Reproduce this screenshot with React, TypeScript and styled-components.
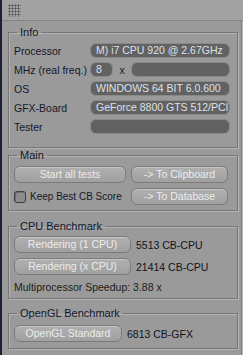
import { Fragment } from "react";
import styled, { createGlobalStyle } from "styled-components";

const GlobalStyle = createGlobalStyle`
  html, body {
    margin: 0;
    padding: 0;
    background: #9a9a9a;
  }
  body {
    font-family: "Liberation Sans", Arial, sans-serif;
  }
`;

const Window = styled.div`
  width: 241px;
  height: 355px;
  border-left: 2px solid #1c2131;
  background: #9a9a9a;
  display: flex;
  flex-direction: column;
  overflow: hidden;
`;

const TopBar = styled.div`
  height: 20px;
  flex: none;
  background: #a2a2a2;
  border-bottom: 1px solid #858585;
  display: flex;
  align-items: center;
  padding-left: 6px;
`;

const Grip = styled.div`
  width: 13px;
  height: 13px;
  background-image: radial-gradient(#4a4a4a 0.9px, transparent 1.1px);
  background-size: 3px 3px;
`;

const Body = styled.div`
  flex: 1;
  display: flex;
`;

const Panel = styled.div`
  width: 230px;
  padding: 5px 3px 0 6px;
  border-right: 1px solid #7d7d7d;
  box-shadow: 1px 0 0 #b9b9b9;
  display: flex;
  flex-direction: column;
`;

const Group = styled.fieldset<{ $pad: string; $gap?: number }>`
  margin: 0 0 ${({ $gap }) => $gap ?? 0}px 0;
  padding: ${({ $pad }) => $pad};
  border: 1px solid #767676;
  box-shadow: inset 1px 1px 0 #b4b4b4, 1px 1px 0 #b4b4b4;
  min-width: 0;
`;

const Legend = styled.legend`
  margin-left: 3px;
  padding: 0 3px;
  font-size: 11px;
  line-height: 13px;
  color: #15172e;
`;

const InfoGrid = styled.div`
  display: grid;
  grid-template-columns: 76px 1fr;
  row-gap: 4px;
  align-items: center;
`;

const Label = styled.div`
  font-size: 10.5px;
  color: #16182a;
  white-space: nowrap;
`;

const Field = styled.div<{ $w?: number }>`
  height: 15px;
  box-sizing: border-box;
  ${({ $w }) => ($w ? `width: ${$w}px; flex: none;` : "flex: 1;")}
  background: #626262;
  border: 1px solid #8a8a8a;
  border-radius: 6px;
  padding: 0 5px;
  color: #dde1ec;
  font-size: 10.5px;
  line-height: 13px;
  white-space: nowrap;
  overflow: hidden;
`;

const FreqRow = styled.div`
  display: flex;
  align-items: center;
`;

const Times = styled.span`
  width: 18px;
  text-align: center;
  font-size: 10.5px;
  color: #16182a;
`;

const ButtonGrid = styled.div<{ $cols: string }>`
  display: grid;
  grid-template-columns: ${({ $cols }) => $cols};
  column-gap: 5px;
  row-gap: 5px;
  align-items: center;
`;

const Button = styled.div`
  height: 17px;
  box-sizing: border-box;
  border: 1px solid #7b7b7b;
  border-radius: 6px;
  background: linear-gradient(#b0b0b0, #a0a0a0);
  box-shadow: inset 0 1px 0 #c6c6c6;
  color: #ececec;
  font-size: 10.5px;
  line-height: 15px;
  text-align: center;
  white-space: nowrap;
`;

const CheckRow = styled.div`
  display: flex;
  align-items: center;
  gap: 4px;
`;

const CheckBox = styled.div`
  width: 12px;
  height: 12px;
  box-sizing: border-box;
  border: 1px solid #3c3c3c;
  border-radius: 3px;
  background: #8c8c8c;
  box-shadow: inset 1px 1px 0 #6f6f6f;
`;

const CheckLabel = styled.span`
  font-size: 10px;
  color: #16182a;
  white-space: nowrap;
`;

const Score = styled.div`
  font-size: 10.5px;
  color: #111322;
  white-space: nowrap;
`;

const Speedup = styled.div`
  margin-top: 6px;
  font-size: 10.5px;
  line-height: 12px;
  color: #1c1d18;
`;

const infoRows = [
  { label: "OS", value: "WINDOWS 64 BIT 6.0.600" },
  { label: "GFX-Board", value: "GeForce 8800 GTS 512/PCI" },
  { label: "Tester", value: "" },
];

export default function App() {
  return (
    <>
      <GlobalStyle />
      <Window>
        <TopBar>
          <Grip />
        </TopBar>
        <Body>
          <Panel>
            <Group $pad="4px 7px 13px 5px" $gap={1}>
              <Legend>Info</Legend>
              <InfoGrid>
                <Label>Processor</Label>
                <Field>M) i7 CPU 920 @ 2.67GHz</Field>
                <Label>MHz (real freq.)</Label>
                <FreqRow>
                  <Field $w={23}>8</Field>
                  <Times>x</Times>
                  <Field />
                </FreqRow>
                {infoRows.map(({ label, value }) => (
                  <Fragment key={label}>
                    <Label>{label}</Label>
                    <Field>{value}</Field>
                  </Fragment>
                ))}
              </InfoGrid>
            </Group>

            <Group $pad="4px 4px 5px 5px" $gap={9}>
              <Legend>Main</Legend>
              <ButtonGrid $cols="112px 97px">
                <Button>Start all tests</Button>
                <Button>-&gt; To Clipboard</Button>
                <CheckRow>
                  <CheckBox />
                  <CheckLabel>Keep Best CB Score</CheckLabel>
                </CheckRow>
                <Button>-&gt; To Database</Button>
              </ButtonGrid>
            </Group>

            <Group $pad="3px 4px 5px 5px" $gap={8}>
              <Legend>CPU Benchmark</Legend>
              <ButtonGrid $cols="117px 1fr">
                <Button>Rendering (1 CPU)</Button>
                <Score>5513 CB-CPU</Score>
                <Button>Rendering (x CPU)</Button>
                <Score>21414 CB-CPU</Score>
              </ButtonGrid>
              <Speedup>Multiprocessor Speedup: 3.88 x</Speedup>
            </Group>

            <Group $pad="5px 4px 6px 5px">
              <Legend>OpenGL Benchmark</Legend>
              <ButtonGrid $cols="108px 1fr">
                <Button>OpenGL Standard</Button>
                <Score>6813 CB-GFX</Score>
              </ButtonGrid>
            </Group>
          </Panel>
        </Body>
      </Window>
    </>
  );
}
